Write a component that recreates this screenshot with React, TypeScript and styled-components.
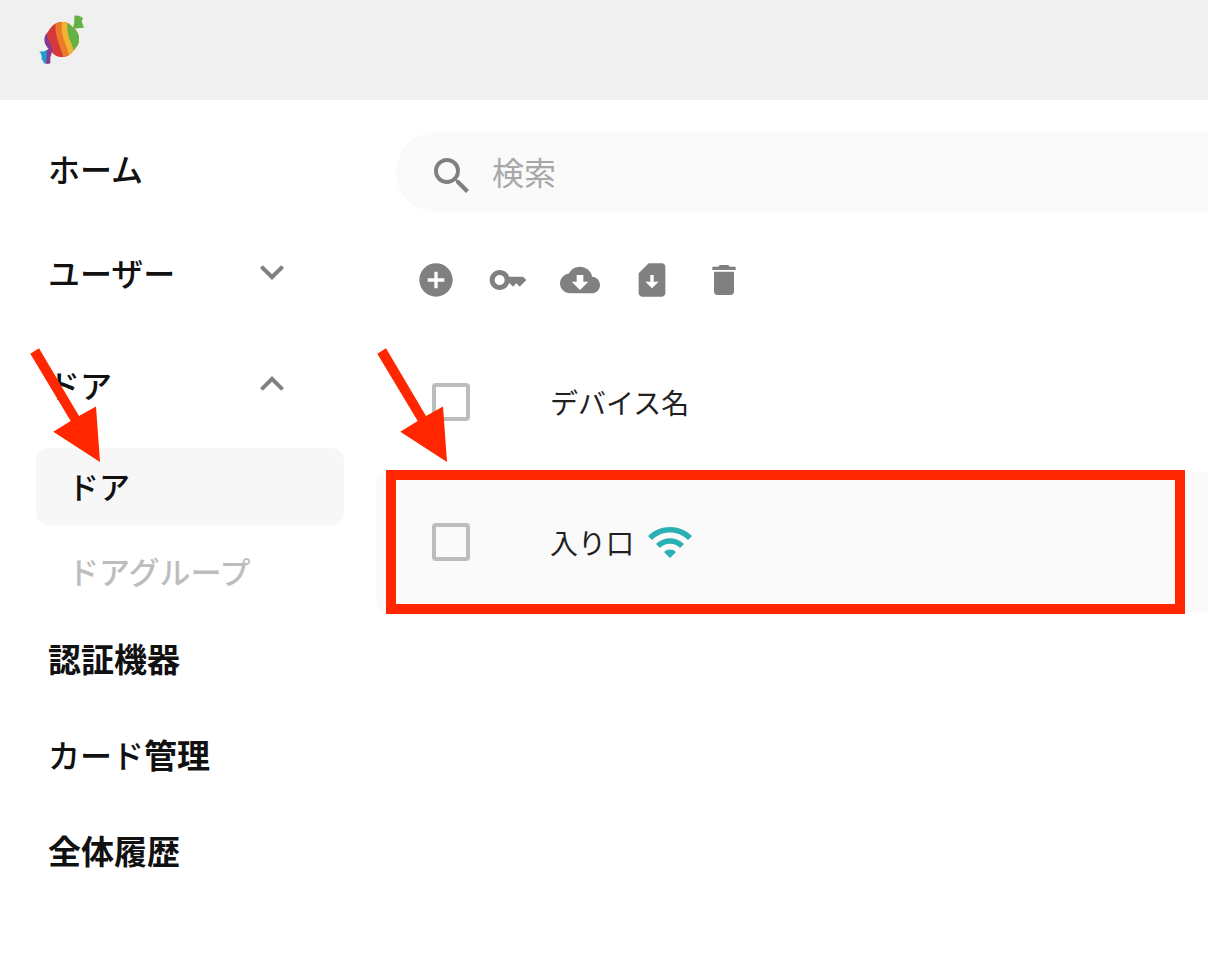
import React from "react";
import styled, { createGlobalStyle } from "styled-components";
import {
  MdAddCircle,
  MdCloudDownload,
  MdDelete,
  MdExpandLess,
  MdExpandMore,
  MdKey,
  MdSearch,
  MdSimCardDownload,
  MdWifi,
} from "react-icons/md";

const GlobalStyle = createGlobalStyle`
  *, *::before, *::after { box-sizing: border-box; }
  body {
    margin: 0;
    background: #fff;
    color: #111;
    font-family: "Noto Sans CJK JP", sans-serif;
  }
  button, input { font-family: inherit; }
`;

const Page = styled.div`
  min-height: 100vh;
  overflow-x: hidden;
`;

const Header = styled.header`
  height: 100px;
  padding: 14px 38px;
  background: #f0f0f0;
`;

const LogoLink = styled.a`
  display: block;
  width: 48px;
  height: 52px;
`;

const Body = styled.div`
  display: flex;
  align-items: flex-start;
`;

const Sidebar = styled.nav`
  position: relative;
  flex: none;
  width: 376px;
  padding: 20px 32px 0 36px;
`;

const navText = `
  padding: 0 12px;
  font-size: 32px;
  line-height: 48px;
  font-weight: 500;
  color: #111;
`;

const NavLink = styled.a`
  ${navText}
  display: flex;
  align-items: center;
  height: 96px;
  text-decoration: none;
`;

const Kanji = styled.span`
  font-size: 33px;
  font-weight: 700;
`;

const NavToggle = styled.button`
  ${navText}
  display: flex;
  align-items: center;
  justify-content: space-between;
  width: 100%;
  height: 112px;
  padding-right: 48px;
  border: 0;
  background: none;
  text-align: left;

  svg { color: #808080; }
`;

const SubMenu = styled.div`
  display: flex;
  flex-direction: column;
  gap: 8px;
  padding: 8px 0 0;
`;

const SubLink = styled.a<{ $active?: boolean }>`
  display: flex;
  align-items: center;
  height: 77px;
  padding: 0 32px 2px;
  border-radius: 12px;
  background: ${(p) => (p.$active ? "#f7f7f7" : "transparent")};
  color: ${(p) => (p.$active ? "#111" : "#bdbdbd")};
  font-size: 31px;
  line-height: 44px;
  font-weight: 500;
  text-decoration: none;
`;

const Main = styled.main`
  flex: 1;
  min-width: 0;
  padding-top: 32px;
`;

const SearchBox = styled.label`
  display: flex;
  align-items: center;
  gap: 16px;
  height: 80px;
  margin-left: 20px;
  padding: 8px 0 0 32px;
  border-radius: 40px 0 0 40px;
  background: #fafafa;
  color: #808080;
`;

const SearchInput = styled.input`
  flex: 1;
  min-width: 0;
  height: 48px;
  margin-bottom: 10px;
  padding: 0;
  border: 0;
  outline: 0;
  background: none;
  font-size: 32px;
  color: #212121;

  &::placeholder { color: #a8a8a8; opacity: 1; }
`;

const Toolbar = styled.div`
  display: flex;
  gap: 32px;
  padding: 48px 40px 32px;
`;

const ToolButton = styled.button`
  display: block;
  width: 40px;
  height: 40px;
  padding: 0;
  border: 0;
  background: none;
  color: #808080;

  svg { display: block; }
`;

const TableArea = styled.section`
  position: relative;
`;

const Table = styled.table`
  width: 100%;
  border-collapse: separate;
  border-spacing: 0;
  font-size: 28px;
  line-height: 40px;
  color: #212121;
`;

const Row = styled.tr<{ $filled?: boolean }>`
  height: 140px;

  th, td {
    padding: 0;
    background: ${(p) => (p.$filled ? "#fafafa" : "transparent")};
    font-weight: 400;
    text-align: left;
    vertical-align: middle;
  }

  > :first-child {
    width: 174px;
    padding-left: 56px;
    border-radius: 12px 0 0 12px;
  }
`;

const Checkbox = styled.input`
  appearance: none;
  display: block;
  width: 38px;
  height: 38px;
  margin: 0;
  border: 4px solid #bdbdbd;
  border-radius: 4px;
  background: transparent;
`;

const Device = styled.div`
  display: flex;
  align-items: center;
  gap: 12px;

  svg { flex: none; color: #2aafb3; }
`;

const Highlight = styled.div`
  position: absolute;
  right: 23px;
  bottom: -2px;
  left: 10px;
  height: 144px;
  border: 10px solid #ff2600;
  pointer-events: none;
`;

const ArrowShape = styled.svg<{ $left: number; $top: number }>`
  position: absolute;
  top: ${(p) => p.$top}px;
  left: ${(p) => p.$left}px;
  pointer-events: none;
`;

function Arrow({ left, top }: { left: number; top: number }) {
  return (
    <ArrowShape $left={left} $top={top} width="72" height="115" viewBox="0 0 72 115" aria-hidden="true">
      <polygon fill="#ff2600" points="0.3,5.7 9,0.3 49,68 66,58.5 70,114 23.3,83.7 40.7,73" />
    </ArrowShape>
  );
}

function Logo() {
  return (
    <svg width="48" height="52" viewBox="24 27 144 156" aria-hidden="true">
      <defs>
        <clipPath id="candy">
          <path d="M132 70C142 79 148 91 147 106C146 119 139 128 131 135C122 149 109 157 94 156C82 156 73 151 65 140L60 134C50 126 43 116 43 102C44 92 50 85 56 77C66 60 79 51 96 51C109 51 120 57 126 65Z" />
        </clipPath>
      </defs>
      <path fill="#62b246" d="M133 32Q144 30 153 35L159 40L155 49L162 68Q154 68 149 69L128 72Q135 54 133 32Z" />
      <path fill="#1e9bd1" d="M28 139Q39 141 50 136L56 138L48 176L41 174Q42 166 35 164Q37 150 28 139Z" />
      <path fill="#8e3a91" d="M50 136L60 128L67 138Q59 155 61 174Q54 179 47 175Q52 158 50 136Z" />
      <g clipPath="url(#candy)">
        <rect x="40" y="48" width="112" height="112" fill="#d6373b" />
        <path fill="#7f3d91" d="M36 70L51 86C52 102 60 112 65 124Q67 132 68 146L36 150Z" />
        <path fill="#ea7b27" d="M78 46C75 66 76 84 83 105C88 126 97 140 100 160L160 160L160 46Z" />
        <path fill="#f3b230" d="M97 46C93 66 95 84 102 104C109 124 116 138 118 160L160 160L160 46Z" />
        <path fill="#62b246" d="M113 46C110 66 112 84 119 103C125 118 130 128 132 150L160 150L160 46Z" />
      </g>
    </svg>
  );
}

const tools = [
  { label: "追加", Icon: MdAddCircle },
  { label: "鍵", Icon: MdKey },
  { label: "ダウンロード", Icon: MdCloudDownload },
  { label: "カードのダウンロード", Icon: MdSimCardDownload },
  { label: "削除", Icon: MdDelete },
];

export default function App() {
  return (
    <Page>
      <GlobalStyle />
      <Header>
        <LogoLink href="#" aria-label="トップ">
          <Logo />
        </LogoLink>
      </Header>
      <Body>
        <Sidebar>
          <NavLink href="#">ホーム</NavLink>
          <NavToggle type="button" aria-expanded="false">
            ユーザー
            <MdExpandMore size={48} />
          </NavToggle>
          <NavToggle type="button" aria-expanded="true">
            ドア
            <MdExpandLess size={48} />
          </NavToggle>
          <SubMenu>
            <SubLink href="#" $active aria-current="page">ドア</SubLink>
            <SubLink href="#">ドアグループ</SubLink>
          </SubMenu>
          <NavLink href="#"><Kanji>認証機器</Kanji></NavLink>
          <NavLink href="#">カード<Kanji>管理</Kanji></NavLink>
          <NavLink href="#"><Kanji>全体履歴</Kanji></NavLink>
          <Arrow left={30} top={248} />
        </Sidebar>
        <Main>
          <SearchBox>
            <MdSearch size={48} />
            <SearchInput type="search" placeholder="検索" aria-label="検索" />
          </SearchBox>
          <Toolbar>
            {tools.map(({ label, Icon }) => (
              <ToolButton key={label} type="button" aria-label={label}>
                <Icon size={40} />
              </ToolButton>
            ))}
          </Toolbar>
          <TableArea>
            <Table>
              <thead>
                <Row>
                  <th><Checkbox type="checkbox" aria-label="すべて選択" /></th>
                  <th scope="col">デバイス名</th>
                </Row>
              </thead>
              <tbody>
                <Row $filled>
                  <td><Checkbox type="checkbox" aria-label="入り口を選択" /></td>
                  <td>
                    <Device>
                      入り口
                      <MdWifi size={48} />
                    </Device>
                  </td>
                </Row>
              </tbody>
            </Table>
            <Highlight />
            <Arrow left={1} top={16} />
          </TableArea>
        </Main>
      </Body>
    </Page>
  );
}
